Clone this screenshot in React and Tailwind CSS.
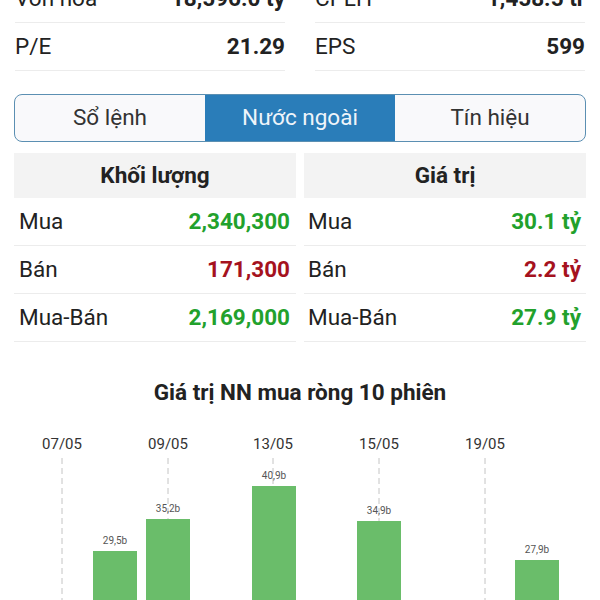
import React from "react";

const font = { fontFamily: "Roboto, 'Noto Sans', Arial, sans-serif" };

function InfoRow({ label, value }) {
  return (
    <div className="h-[48px] flex items-center justify-between border-b border-[#ececec]">
      <span className="text-[22.5px] text-[#222]">{label}</span>
      <span className="text-[22.5px] font-bold text-[#222]">{value}</span>
    </div>
  );
}

function DataTable({ title, rows, lp, rp }) {
  return (
    <div className="flex flex-col">
      <div className="h-[45px] bg-[#f3f3f3] flex items-center justify-center text-[22.5px] font-bold text-[#222]">
        {title}
      </div>
      {rows.map((r) => (
        <div
          key={r.label}
          className={`h-[48px] flex items-center justify-between border-b border-[#ececec] ${lp} ${rp}`}
        >
          <span className="text-[22.5px] text-[#222]">{r.label}</span>
          <span className={`text-[22.5px] font-bold ${r.color}`}>{r.value}</span>
        </div>
      ))}
    </div>
  );
}

const dates = [
  { x: 62, t: "07/05" },
  { x: 168, t: "09/05" },
  { x: 273, t: "13/05" },
  { x: 379, t: "15/05" },
  { x: 485, t: "19/05" },
];

const bars = [
  { x: 93, top: 143, v: "29,5b" },
  { x: 146, top: 111, v: "35,2b" },
  { x: 252, top: 78, v: "40,9b" },
  { x: 357, top: 113, v: "34,9b" },
  { x: 515, top: 152, v: "27,9b" },
];

export default function App() {
  return (
    <div className="w-[600px] h-[600px] overflow-hidden bg-white" style={font}>
      <div className="-mt-[25px] grid grid-cols-2 gap-x-[30px] px-[15px]">
        <InfoRow label="Vốn hóa" value="18,596.0 tỷ" />
        <InfoRow label="CPLH" value="1,458.5 tr" />
        <InfoRow label="P/E" value="21.29" />
        <InfoRow label="EPS" value="599" />
      </div>

      <div className="mt-[23px] mx-[14px] h-[48px] grid grid-cols-3 rounded-[8px] border-[1.5px] border-[#5b8fb2] overflow-hidden bg-[#f9f9fb]">
        <div className="flex items-center justify-center text-[22.5px] text-[#333]">Sổ lệnh</div>
        <div className="flex items-center justify-center text-[22.5px] text-[#eef4fa] bg-[#2a7db9]">Nước ngoài</div>
        <div className="flex items-center justify-center text-[22.5px] text-[#333]">Tín hiệu</div>
      </div>

      <div className="mt-[11px] px-[14px] grid grid-cols-2 gap-x-[8px]">
        <DataTable
          title="Khối lượng"
          lp="pl-[5px]"
          rp="pr-[6px]"
          rows={[
            { label: "Mua", value: "2,340,300", color: "text-[#22a12c]" },
            { label: "Bán", value: "171,300", color: "text-[#a5121e]" },
            { label: "Mua-Bán", value: "2,169,000", color: "text-[#22a12c]" },
          ]}
        />
        <DataTable
          title="Giá trị"
          lp="pl-[4px]"
          rp="pr-[5px]"
          rows={[
            { label: "Mua", value: "30.1 tỷ", color: "text-[#22a12c]" },
            { label: "Bán", value: "2.2 tỷ", color: "text-[#a5121e]" },
            { label: "Mua-Bán", value: "27.9 tỷ", color: "text-[#22a12c]" },
          ]}
        />
      </div>

      <div className="mt-[36px] h-[30px] flex items-center justify-center text-[22.5px] font-bold text-[#222]">
        Giá trị NN mua ròng 10 phiên
      </div>

      <svg width="600" height="200" className="block">
        {dates.map((d) => (
          <g key={d.t}>
            <text
              x={d.x}
              y={41}
              textAnchor="middle"
              fontSize="15"
              fill="#333"
              style={font}
            >
              {d.t}
            </text>
            <line
              x1={d.x}
              y1={50}
              x2={d.x}
              y2={200}
              stroke="#c4c4c4"
              strokeWidth="1"
              strokeDasharray="6 4"
            />
          </g>
        ))}
        {bars.map((b) => (
          <g key={b.v}>
            <rect x={b.x} y={b.top} width={44} height={200 - b.top} fill="#6abd6a" />
            <text
              x={b.x + 22}
              y={b.top - 7}
              textAnchor="middle"
              fontSize="10"
              fill="#555"
              style={font}
            >
              {b.v}
            </text>
          </g>
        ))}
      </svg>
    </div>
  );
}
